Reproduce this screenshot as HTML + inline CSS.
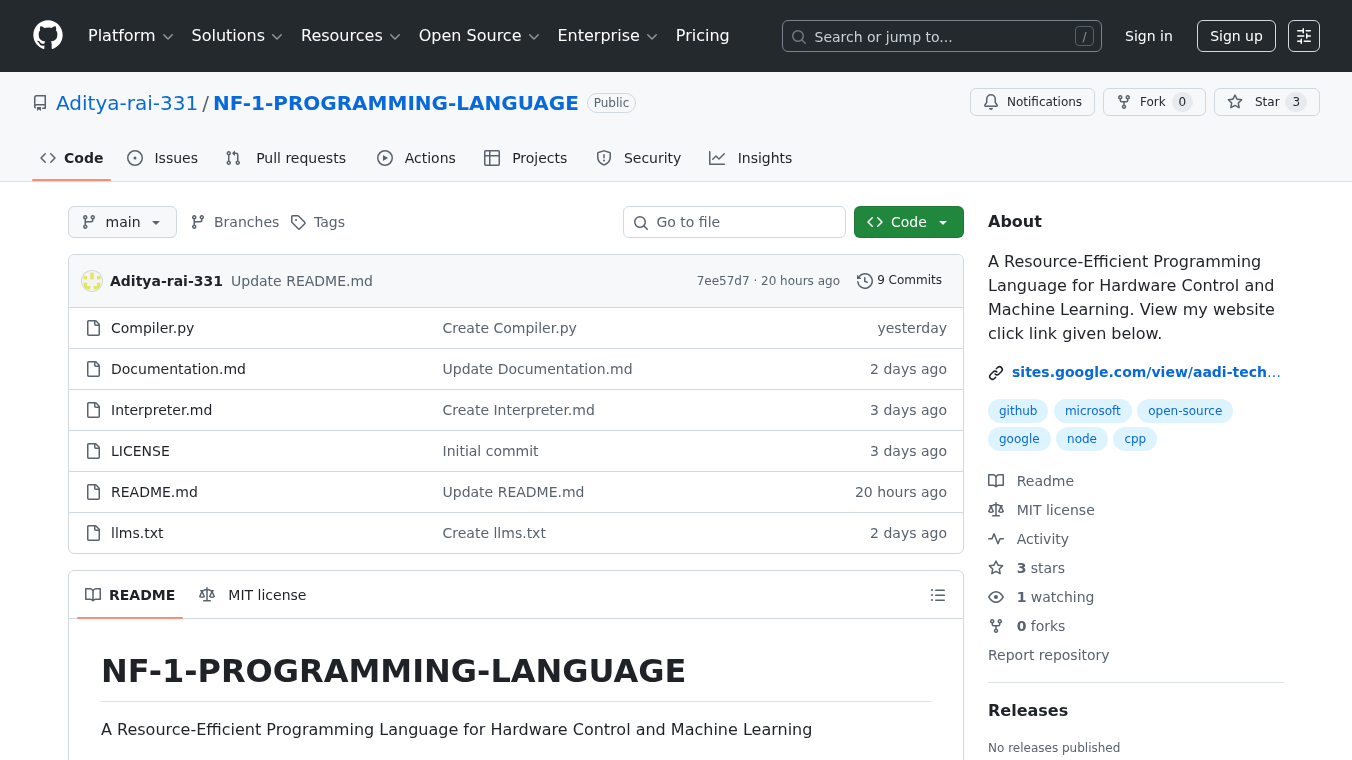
<!DOCTYPE html>
<html lang="en">
<head>
<meta charset="utf-8">
<title>Aditya-rai-331/NF-1-PROGRAMMING-LANGUAGE</title>
<style>
*{box-sizing:border-box}
html,body{margin:0;padding:0}
body{width:1352px;height:760px;overflow:hidden;will-change:transform;background:#fff;color:#1f2328;font-family:"DejaVu Sans","Liberation Sans",sans-serif;font-size:14px;line-height:1.5}
a{color:inherit;text-decoration:none}
svg{display:inline-block;fill:currentColor;vertical-align:text-bottom;overflow:visible}
/* header */
.hdr{position:absolute;left:0;top:0;width:1352px;height:72px;background:#24292e;color:#fff}
.hdr .logo{position:absolute;left:32px;top:18.6px;width:32px;height:32px;color:#fff}
.nav{position:absolute;left:80px;top:20px;height:32px;display:flex;align-items:center;font-size:16px;line-height:24px}
.nav .it{padding:0 8px;display:flex;align-items:center;white-space:nowrap}
.nav .it svg{margin-left:4.4px;margin-right:-.4px;opacity:.5;width:16px;height:16px;position:relative;top:1px}
.srch{position:absolute;left:782px;top:20px;width:320px;height:32px;border:1px solid #7a838e;border-radius:6px;color:#c9d1d9;font-size:14px}
.srch svg.s{position:absolute;left:8px;top:7.5px;color:#6e7781}
.srch .ph{position:absolute;left:31.5px;top:6px;line-height:21px;color:#c9d1d9}
.srch .k{position:absolute;right:7px;top:5px;width:19px;height:20px;border:1px solid #57606a;border-radius:4px;color:#8c959f;font-size:12px;line-height:20px;text-align:center}
.signin{position:absolute;left:1125px;top:24px;font-size:14px;line-height:24px;color:#fff}
.signup{position:absolute;left:1197px;top:20px;width:79px;height:32px;border:1px solid #d1d9e0;border-radius:6px;font-size:14px;line-height:30px;text-align:center;color:#fff}
.sld{position:absolute;left:1288px;top:20px;width:32px;height:32px;border:1px solid #d1d9e0;border-radius:6px;color:#fff}
.sld svg{position:absolute;left:7px;top:7px}
/* repo head */
.rh{position:absolute;left:0;top:72px;width:1352px;height:110px;background:#f6f8fa;border-bottom:1px solid #d1d9e0b3}

.rh .ricon{position:absolute;left:32px;top:23px;color:#59636e}
.rh .ttl{position:absolute;left:56px;top:16px;font-size:20px;line-height:30px;white-space:nowrap;display:flex;align-items:center}
.rh .ttl .o{color:#0969da}
.rh .ttl .sl{color:#59636e;margin:0 4px}
.rh .ttl .r{color:#0969da;font-weight:bold}
.rh .ttl .pub{margin-left:8px;font-size:12px;line-height:18px;font-weight:normal;color:#59636e;border:1px solid #d1d9e0;border-radius:2em;padding:0 5.9px}
.btn{position:absolute;top:16px;height:28px;border:1px solid #d1d9e0;border-radius:6px;background:#f6f8fa;font-size:12px;line-height:20px;color:#24292f;padding:3px 12px;white-space:nowrap;display:flex;align-items:center}
.btn svg{color:#59636e;margin-right:8px}
.btn .cnt{margin-left:5.8px;background:rgba(175,184,193,.2);border:1px solid transparent;border-radius:2em;padding:0 6px;min-width:20px;line-height:18px;font-size:12px;text-align:center}
.tabs{position:absolute;left:32px;top:62px;height:48px;display:flex;font-size:14px;line-height:30px}
.tabs .t{position:relative;display:flex;align-items:center;padding:0 8px;height:32px;margin-right:8px;margin-top:8px;white-space:nowrap;color:#1f2328}
.tabs .t svg{color:#59636e;margin-right:8px}
.tabs .t .tx{display:inline-block;text-align:center;font-weight:normal}
.tabs .t.sel .tx{font-weight:bold}
.tabs .t.sel:after{content:"";position:absolute;left:0;right:0;bottom:-7px;height:2px;background:#fd8c73;border-radius:6px}

/* main */
#main{position:absolute;left:0;top:182px;width:1352px;height:578px;background:#fff}
.abs{position:absolute}
.bbtn{position:absolute;left:68px;top:24px;width:109px;height:32px;border:1px solid #d1d9e0;border-radius:6px;background:#f6f8fa;font-size:14px;line-height:20px;color:#24292f;display:flex;align-items:center;padding:0 12px}
.bbtn svg.br{color:#59636e;margin-right:8.6px}
.bbtn svg.tri{color:#59636e;margin-left:auto}
.lnk{position:absolute;top:24px;height:32px;display:flex;align-items:center;font-size:14px;color:#59636e;white-space:nowrap}
.lnk svg{margin-right:8px}
.gtf{position:absolute;left:623px;top:24px;width:223px;height:32px;border:1px solid #d1d9e0;border-radius:6px;background:#fff;color:#59636e;font-size:14px;line-height:20px}
.gtf svg{position:absolute;left:8.5px;top:7.5px}
.gtf span{position:absolute;left:32.5px;top:5px}
.cbtn{position:absolute;left:854px;top:24px;width:110px;height:32px;border:1px solid rgba(31,35,40,.15);border-radius:6px;background:#1f883d;color:#fff;font-size:14px;line-height:20px;font-weight:normal;display:flex;align-items:center;padding:0 12px}
.cbtn svg.c{margin-right:8px}
.cbtn svg.tri{margin-left:auto}
.box{position:absolute;left:68px;top:72px;width:896px;height:300px;border:1px solid #d1d9e0;border-radius:6px;overflow:hidden;background:#fff}
.box .hd{position:relative;height:53px;background:#f6f8fa;border-bottom:1px solid #d1d9e0}
.box .row{position:relative;height:41px;border-top:1px solid #d1d9e0;font-size:14px;line-height:20px}
.box .hd + .row{border-top:0;height:40px}
.box .row svg{position:absolute;left:16px;bottom:12px;color:#59636e}
.box .row .n{position:absolute;left:42px;bottom:10px;color:#1f2328}
.box .row .m{position:absolute;left:373.5px;bottom:10px;color:#59636e}
.box .row .d{position:absolute;right:16px;bottom:10px;color:#59636e}

.hd .av{position:absolute;left:13px;top:16px;width:20px;height:20px;border-radius:50%;background:#f0f0e0;box-shadow:0 0 0 1px rgba(31,35,40,.15);overflow:hidden}
.hd .au{position:absolute;left:41px;top:16px;font-size:14px;line-height:20px;font-weight:bold;color:#1f2328;white-space:nowrap}
.hd .ms{position:absolute;left:162px;top:16px;font-size:14px;line-height:20px;color:#59636e;white-space:nowrap}
.hd .sha{position:absolute;right:123px;top:17px;font-size:12px;line-height:18px;color:#59636e;white-space:nowrap}
.hd .cm{position:absolute;right:21px;top:16px;font-size:12px;line-height:18px;color:#1f2328;white-space:nowrap;display:flex;align-items:center;font-weight:normal}
.hd .cm svg{margin-right:4px;margin-left:1px;position:relative;top:1px;color:#59636e}
/* readme */
.rd{position:absolute;left:68px;top:388px;width:896px;height:220px;border:1px solid #d1d9e0;border-radius:6px;background:#fff}
.rd .th{position:relative;height:48px;border-bottom:1px solid #d1d9e0}
.rd .tb{position:absolute;top:8px;height:32px;display:flex;align-items:center;font-size:14px;line-height:20px;color:#1f2328;white-space:nowrap}
.rd .tb svg{color:#59636e;margin-right:8px}
.rd .tb b{display:inline-block;text-align:center;font-weight:normal}
.rd .tb.sel b{font-weight:bold}
.rd .tb.sel:after{content:"";position:absolute;left:-8px;right:-8px;bottom:-8px;height:2px;background:#fd8c73;border-radius:6px}
.rd .ol{position:absolute;right:17px;top:16px;color:#59636e}
.rd h1{position:absolute;left:32px;top:80px;width:830px;margin:0;font-size:32px;line-height:40px;font-weight:bold;color:#1f2328;padding-bottom:9.6px;border-bottom:1px solid #d1d9e0b3;white-space:nowrap}
.rd p{position:absolute;left:32px;top:147px;margin:0;font-size:16px;line-height:24px;color:#1f2328;white-space:nowrap}
/* sidebar */
.sb{position:absolute;left:988px;top:0;width:296px}
.sb h2{position:absolute;left:0;margin:0;font-size:16px;line-height:24px;font-weight:bold;color:#1f2328}
.sb .desc{position:absolute;left:0;top:68px;width:296px;font-size:16px;line-height:24px;color:#1f2328}
.sb .url{position:absolute;left:0;top:180px;font-size:14px;line-height:20px;font-weight:bold;color:#0969da;white-space:nowrap;display:flex;align-items:center}
.sb .url svg{color:#1f2328;margin-right:8px;position:relative;top:1px}
.sb .tps{position:absolute;left:0;top:217px;width:296px;display:flex;flex-wrap:wrap;column-gap:5.4px;row-gap:4.3px}
.sb .tp{height:24px;border:1px solid transparent;border-radius:2em;background:#ddf4ff;color:#0969da;font-size:12px;line-height:22px;padding:0 10px;white-space:nowrap}
.sb .li{position:absolute;left:0;font-size:14px;line-height:21px;color:#59636e;white-space:nowrap;display:flex;align-items:center}
.sb .li svg{margin-right:12.7px;position:relative;top:-1px}
.sb .li b{font-weight:bold;margin-right:4.3px}
.sb hr{position:absolute;left:0;top:500px;width:296px;height:1px;border:0;margin:0;background:#d1d9e0b3}
.sb .nr{position:absolute;left:0;top:557px;font-size:12px;line-height:18px;color:#59636e;white-space:nowrap}
</style>
</head>
<body>
<div class="hdr">
  <svg class="logo" viewBox="0 0 24 24"><path d="M12 1C5.923 1 1 5.923 1 12c0 4.867 3.149 8.979 7.521 10.436.55.096.756-.233.756-.522 0-.262-.013-1.128-.013-2.049-2.764.509-3.479-.674-3.699-1.292-.124-.317-.66-1.293-1.127-1.554-.385-.207-.936-.715-.014-.729.866-.014 1.485.797 1.691 1.128.99 1.663 2.571 1.196 3.204.907.096-.715.385-1.196.701-1.471-2.448-.275-5.005-1.224-5.005-5.432 0-1.196.426-2.186 1.128-2.956-.111-.275-.496-1.402.11-2.915 0 0 .921-.288 3.024 1.128a10.193 10.193 0 0 1 2.75-.371c.936 0 1.871.123 2.75.371 2.104-1.43 3.025-1.128 3.025-1.128.605 1.513.221 2.64.111 2.915.701.77 1.127 1.747 1.127 2.956 0 4.222-2.571 5.157-5.019 5.432.399.344.743 1.004.743 2.035 0 1.471-.014 2.654-.014 3.025 0 .289.206.632.756.522C19.851 20.979 23 16.854 23 12c0-6.077-4.922-11-11-11Z"/></svg>
  <div class="nav">
    <span class="it">Platform<svg viewBox="0 0 16 16"><path d="M12.78 5.22a.749.749 0 0 1 0 1.06l-4.25 4.25a.749.749 0 0 1-1.06 0L3.22 6.28a.749.749 0 1 1 1.06-1.06L8 8.939l3.72-3.719a.749.749 0 0 1 1.06 0Z"/></svg></span>
    <span class="it">Solutions<svg viewBox="0 0 16 16"><path d="M12.78 5.22a.749.749 0 0 1 0 1.06l-4.25 4.25a.749.749 0 0 1-1.06 0L3.22 6.28a.749.749 0 1 1 1.06-1.06L8 8.939l3.72-3.719a.749.749 0 0 1 1.06 0Z"/></svg></span>
    <span class="it">Resources<svg viewBox="0 0 16 16"><path d="M12.78 5.22a.749.749 0 0 1 0 1.06l-4.25 4.25a.749.749 0 0 1-1.06 0L3.22 6.28a.749.749 0 1 1 1.06-1.06L8 8.939l3.72-3.719a.749.749 0 0 1 1.06 0Z"/></svg></span>
    <span class="it">Open Source<svg viewBox="0 0 16 16"><path d="M12.78 5.22a.749.749 0 0 1 0 1.06l-4.25 4.25a.749.749 0 0 1-1.06 0L3.22 6.28a.749.749 0 1 1 1.06-1.06L8 8.939l3.72-3.719a.749.749 0 0 1 1.06 0Z"/></svg></span>
    <span class="it">Enterprise<svg viewBox="0 0 16 16"><path d="M12.78 5.22a.749.749 0 0 1 0 1.06l-4.25 4.25a.749.749 0 0 1-1.06 0L3.22 6.28a.749.749 0 1 1 1.06-1.06L8 8.939l3.72-3.719a.749.749 0 0 1 1.06 0Z"/></svg></span>
    <span class="it">Pricing</span>
  </div>
  <div class="srch">
    <svg class="s" width="16" height="16" viewBox="0 0 16 16"><path d="M10.68 11.74a6 6 0 0 1-7.922-8.982 6 6 0 0 1 8.982 7.922l3.04 3.04a.749.749 0 0 1-.326 1.275.749.749 0 0 1-.734-.215ZM11.5 7a4.499 4.499 0 1 0-8.997 0A4.499 4.499 0 0 0 11.5 7Z"/></svg>
    <span class="ph">Search or jump to...</span>
    <span class="k">/</span>
  </div>
  <span class="signin">Sign in</span>
  <span class="signup">Sign up</span>
  <span class="sld"><svg width="16" height="16" viewBox="0 0 16 16"><path d="M15 2.75a.75.75 0 0 1-.75.75h-4a.75.75 0 0 1 0-1.5h4a.75.75 0 0 1 .75.75Zm-8.5.75v1.25a.75.75 0 0 0 1.5 0v-4a.75.75 0 0 0-1.5 0V2H1.75a.75.75 0 0 0 0 1.5H6.5Zm1.25 5.25a.75.75 0 0 0 0-1.5h-6a.75.75 0 0 0 0 1.5h6ZM15 8a.75.75 0 0 1-.75.75H11.5V10a.75.75 0 1 1-1.5 0V6a.75.75 0 0 1 1.5 0v1.25h2.75A.75.75 0 0 1 15 8Zm-9 5.25v-2a.75.75 0 0 0-1.5 0v1.25H1.75a.75.75 0 0 0 0 1.5H4.5v1.25a.75.75 0 0 0 1.5 0v-1.25Zm9 0a.75.75 0 0 1-.75.75h-6a.75.75 0 0 1 0-1.5h6a.75.75 0 0 1 .75.75Z"/></svg></span>
</div>
<div class="rh" id="rh">
  <svg class="ricon" width="16" height="16" viewBox="0 0 16 16"><path d="M2 2.5A2.5 2.5 0 0 1 4.5 0h8.75a.75.75 0 0 1 .75.75v12.5a.75.75 0 0 1-.75.75h-2.5a.75.75 0 0 1 0-1.5h1.75v-2h-8a1 1 0 0 0-.714 1.7.75.75 0 1 1-1.072 1.05A2.495 2.495 0 0 1 2 11.5Zm10.5-1h-8a1 1 0 0 0-1 1v6.708A2.486 2.486 0 0 1 4.5 9h8ZM5 12.25a.25.25 0 0 1 .25-.25h3.5a.25.25 0 0 1 .25.25v3.25a.25.25 0 0 1-.4.2l-1.45-1.087a.249.249 0 0 0-.3 0L5.4 15.7a.25.25 0 0 1-.4-.2Z"/></svg>
  <div class="ttl"><span class="o">Aditya-rai-331</span><span class="sl">/</span><span class="r">NF-1-PROGRAMMING-LANGUAGE</span><span class="pub">Public</span></div>
  <div class="btn" style="left:970px;width:125px"><svg width="16" height="16" viewBox="0 0 16 16"><path d="M8 16a2 2 0 0 0 1.985-1.75c.017-.137-.097-.25-.235-.25h-3.5c-.138 0-.252.113-.235.25A2 2 0 0 0 8 16ZM3 5a5 5 0 0 1 10 0v2.947c0 .05.015.098.042.139l1.703 2.555A1.519 1.519 0 0 1 13.482 13H2.518a1.516 1.516 0 0 1-1.263-2.36l1.703-2.554A.255.255 0 0 0 3 7.947Zm5-3.5A3.5 3.5 0 0 0 4.5 5v2.947c0 .346-.102.683-.294.97l-1.703 2.556a.017.017 0 0 0-.003.01l.001.006c0 .002.002.004.004.006l.006.004.007.001h10.964l.007-.001.006-.004.004-.006.001-.007a.017.017 0 0 0-.003-.01l-1.703-2.554a1.745 1.745 0 0 1-.294-.97V5A3.5 3.5 0 0 0 8 1.5Z"/></svg>Notifications</div>
  <div class="btn" style="left:1103px;width:102.5px"><svg width="16" height="16" viewBox="0 0 16 16"><path d="M5 5.372v.878c0 .414.336.75.75.75h4.5a.75.75 0 0 0 .75-.75v-.878a2.25 2.25 0 1 1 1.500 0v.878a2.25 2.25 0 0 1-2.25 2.25h-1.500v2.128a2.251 2.251 0 1 1-1.500 0V8.500h-1.500A2.250 2.250 0 0 1 3.500 6.250v-.878a2.250 2.250 0 1 1 1.500 0ZM5 3.250a.750.750 0 1 0-1.500 0 .750.750 0 0 0 1.500 0Zm6.750.750a.750.750 0 1 0 0-1.500.750.750 0 0 0 0 1.500Zm-3 8.750a.750.750 0 1 0-1.500 0 .750.750 0 0 0 1.500 0Z"/></svg>Fork<span class="cnt">0</span></div>
  <div class="btn" style="left:1214px;width:106px"><svg width="16" height="16" viewBox="0 0 16 16"><path d="M8 .25a.75.75 0 0 1 .673.418l1.882 3.815 4.21.612a.75.75 0 0 1 .416 1.279l-3.046 2.97.719 4.192a.751.751 0 0 1-1.088.791L8 12.347l-3.766 1.98a.75.75 0 0 1-1.088-.79l.72-4.194L.818 6.374a.75.75 0 0 1 .416-1.28l4.21-.611L7.327.668A.75.75 0 0 1 8 .25Zm0 2.445L6.615 5.5a.75.75 0 0 1-.564.41l-3.097.45 2.24 2.184a.75.75 0 0 1 .216.664l-.528 3.084 2.769-1.456a.75.75 0 0 1 .698 0l2.77 1.456-.53-3.084a.75.75 0 0 1 .216-.664l2.24-2.183-3.096-.45a.75.75 0 0 1-.564-.41L8 2.694Z"/></svg><span style="margin-left:4px">Star</span><span class="cnt">3</span></div>
  <div class="tabs">
    <span class="t sel"><svg width="16" height="16" viewBox="0 0 16 16"><path d="m11.28 3.22 4.25 4.25a.75.75 0 0 1 0 1.06l-4.25 4.25a.749.749 0 0 1-1.275-.326.749.749 0 0 1 .215-.734L13.94 8l-3.72-3.72a.749.749 0 0 1 .326-1.275.749.749 0 0 1 .734.215Zm-6.56 0a.751.751 0 0 1 1.042.018.751.751 0 0 1 .018 1.042L2.06 8l3.72 3.72a.749.749 0 0 1-.326 1.275.749.749 0 0 1-.734-.215L.47 8.53a.75.75 0 0 1 0-1.06Z"/></svg><b class="tx" style="width:39.42px">Code</b></span>
    <span class="t"><svg width="16" height="16" viewBox="0 0 16 16"><path d="M8 9.5a1.5 1.5 0 1 0 0-3 1.5 1.5 0 0 0 0 3Z"/><path d="M8 0a8 8 0 1 1 0 16A8 8 0 0 1 8 0ZM1.5 8a6.5 6.5 0 1 0 13 0 6.5 6.5 0 0 0-13 0Z"/></svg><b class="tx" style="width:49.67px">Issues</b></span>
    <span class="t"><svg width="16" height="16" viewBox="0 0 16 16"><path d="M1.5 3.25a2.25 2.25 0 1 1 3 2.122v5.256a2.251 2.251 0 1 1-1.5 0V5.372A2.25 2.25 0 0 1 1.5 3.25Zm5.677-.177L9.573.677A.25.25 0 0 1 10 .854V2.5h1A2.5 2.5 0 0 1 13.5 5v5.628a2.251 2.251 0 1 1-1.5 0V5a1 1 0 0 0-1-1h-1v1.646a.25.25 0 0 1-.427.177L7.177 3.427a.25.25 0 0 1 0-.354ZM3.75 2.5a.75.75 0 1 0 0 1.5.75.75 0 0 0 0-1.5Zm0 9.5a.75.75 0 1 0 0 1.5.75.75 0 0 0 0-1.5Zm8.25.75a.75.75 0 1 0 1.5 0 .75.75 0 0 0-1.5 0Z"/></svg><b class="tx" style="width:103.95px">Pull requests</b></span>
    <span class="t"><svg width="16" height="16" viewBox="0 0 16 16"><path d="M8 0a8 8 0 1 1 0 16A8 8 0 0 1 8 0ZM1.5 8a6.5 6.5 0 1 0 13 0 6.5 6.5 0 0 0-13 0Zm4.879-2.773 4.264 2.559a.25.25 0 0 1 0 .428l-4.264 2.559A.25.25 0 0 1 6 10.559V5.442a.25.25 0 0 1 .379-.215Z"/></svg><b class="tx" style="width:58.55px">Actions</b></span>
    <span class="t"><svg width="16" height="16" viewBox="0 0 16 16"><path d="M0 1.75C0 .784.784 0 1.75 0h12.5C15.216 0 16 .784 16 1.75v12.5A1.75 1.75 0 0 1 14.25 16H1.75A1.75 1.75 0 0 1 0 14.25ZM6.5 6.5v8h7.75a.25.25 0 0 0 .25-.25V6.5Zm8-1.5V1.75a.25.25 0 0 0-.25-.25H6.5V5Zm-13 1.5v7.75c0 .138.112.25.25.25H5v-8ZM5 5V1.5H1.75a.25.25 0 0 0-.25.25V5Z"/></svg><b class="tx" style="width:64.41px">Projects</b></span>
    <span class="t"><svg width="16" height="16" viewBox="0 0 16 16"><path d="M7.467.133a1.748 1.748 0 0 1 1.066 0l5.25 1.68A1.75 1.75 0 0 1 15 3.48V7c0 1.566-.32 3.182-1.303 4.682-.983 1.498-2.585 2.813-5.032 3.855a1.697 1.697 0 0 1-1.33 0c-2.447-1.042-4.049-2.357-5.032-3.855C1.32 10.182 1 8.566 1 7V3.48a1.75 1.75 0 0 1 1.217-1.667Zm.61 1.429a.25.25 0 0 0-.153 0l-5.25 1.68a.25.25 0 0 0-.174.238V7c0 1.358.275 2.666 1.057 3.86.784 1.194 2.121 2.34 4.366 3.297a.196.196 0 0 0 .154 0c2.245-.956 3.582-2.104 4.366-3.298C13.225 9.666 13.5 8.36 13.5 7V3.48a.251.251 0 0 0-.174-.237l-5.25-1.68ZM8.75 4.75v3a.75.75 0 0 1-1.5 0v-3a.75.75 0 0 1 1.5 0ZM9 10.5a1 1 0 1 1-2 0 1 1 0 0 1 2 0Z"/></svg><b class="tx" style="width:65.38px">Security</b></span>
    <span class="t"><svg width="16" height="16" viewBox="0 0 16 16"><path d="M1.5 1.75V13.5h13.75a.75.75 0 0 1 0 1.5H.75a.75.75 0 0 1-.75-.75V1.75a.75.75 0 0 1 1.5 0Zm14.28 2.53-5.25 5.25a.75.75 0 0 1-1.06 0L7 7.06 4.28 9.78a.751.751 0 0 1-1.042-.018.751.751 0 0 1-.018-1.042l3.25-3.25a.75.75 0 0 1 1.06 0L10 7.94l4.72-4.72a.751.751 0 0 1 1.042.018.751.751 0 0 1 .018 1.042Z"/></svg><b class="tx" style="width:63.33px">Insights</b></span>
  </div>
</div>
<div id="main">
  <div class="bbtn"><svg class="br" width="16" height="16" viewBox="0 0 16 16"><path d="M9.5 3.25a2.25 2.25 0 1 1 3 2.122V6A2.5 2.5 0 0 1 10 8.5H6a1 1 0 0 0-1 1v1.128a2.251 2.251 0 1 1-1.5 0V5.372a2.25 2.25 0 1 1 1.5 0v1.836A2.493 2.493 0 0 1 6 7h4a1 1 0 0 0 1-1v-.628A2.25 2.25 0 0 1 9.5 3.25Zm-6 0a.75.75 0 1 0 1.5 0 .75.75 0 0 0-1.5 0Zm8.25-.75a.75.75 0 1 0 0 1.5.75.75 0 0 0 0-1.5ZM4.25 12a.75.75 0 1 0 0 1.5.75.75 0 0 0 0-1.5Z"/></svg>main<svg class="tri" width="16" height="16" viewBox="0 0 16 16"><path d="m4.427 7.427 3.396 3.396a.25.25 0 0 0 .354 0l3.396-3.396A.25.25 0 0 0 11.396 7H4.604a.25.25 0 0 0-.177.427Z"/></svg></div>
  <div class="lnk" style="left:190px"><svg width="16" height="16" viewBox="0 0 16 16"><path d="M9.5 3.25a2.25 2.25 0 1 1 3 2.122V6A2.5 2.5 0 0 1 10 8.5H6a1 1 0 0 0-1 1v1.128a2.251 2.251 0 1 1-1.5 0V5.372a2.25 2.25 0 1 1 1.5 0v1.836A2.493 2.493 0 0 1 6 7h4a1 1 0 0 0 1-1v-.628A2.25 2.25 0 0 1 9.5 3.25Zm-6 0a.75.75 0 1 0 1.5 0 .75.75 0 0 0-1.5 0Zm8.25-.75a.75.75 0 1 0 0 1.5.75.75 0 0 0 0-1.5ZM4.25 12a.75.75 0 1 0 0 1.5.75.75 0 0 0 0-1.5Z"/></svg>Branches</div>
  <div class="lnk" style="left:290px"><svg width="16" height="16" viewBox="0 0 16 16"><path d="M1 7.775V2.75C1 1.784 1.784 1 2.75 1h5.025c.464 0 .91.184 1.238.513l6.25 6.25a1.75 1.75 0 0 1 0 2.474l-5.026 5.026a1.75 1.75 0 0 1-2.474 0l-6.25-6.25A1.752 1.752 0 0 1 1 7.775Zm1.5 0c0 .066.026.13.073.177l6.25 6.25a.25.25 0 0 0 .354 0l5.025-5.025a.25.25 0 0 0 0-.354l-6.25-6.25a.25.25 0 0 0-.177-.073H2.75a.25.25 0 0 0-.25.25ZM6 5a1 1 0 1 1 0 2 1 1 0 0 1 0-2Z"/></svg>Tags</div>
  <div class="gtf"><svg width="16" height="16" viewBox="0 0 16 16"><path d="M10.68 11.74a6 6 0 0 1-7.922-8.982 6 6 0 0 1 8.982 7.922l3.04 3.04a.749.749 0 0 1-.326 1.275.749.749 0 0 1-.734-.215ZM11.5 7a4.499 4.499 0 1 0-8.997 0A4.499 4.499 0 0 0 11.5 7Z"/></svg><span>Go to file</span></div>
  <div class="cbtn"><svg class="c" width="16" height="16" viewBox="0 0 16 16"><path d="m11.28 3.22 4.25 4.25a.75.75 0 0 1 0 1.06l-4.25 4.25a.749.749 0 0 1-1.275-.326.749.749 0 0 1 .215-.734L13.94 8l-3.72-3.72a.749.749 0 0 1 .326-1.275.749.749 0 0 1 .734.215Zm-6.56 0a.751.751 0 0 1 1.042.018.751.751 0 0 1 .018 1.042L2.06 8l3.72 3.72a.749.749 0 0 1-.326 1.275.749.749 0 0 1-.734-.215L.47 8.53a.75.75 0 0 1 0-1.06Z"/></svg>Code<svg class="tri" width="16" height="16" viewBox="0 0 16 16"><path d="m4.427 7.427 3.396 3.396a.25.25 0 0 0 .354 0l3.396-3.396A.25.25 0 0 0 11.396 7H4.604a.25.25 0 0 0-.177.427Z"/></svg></div>
  <div class="box">
    <div class="hd" id="hd">
      <span class="av"><svg width="20" height="20" viewBox="0 0 20 20"><defs><filter id="avb" x="-20%" y="-20%" width="140%" height="140%"><feGaussianBlur stdDeviation="0.55"/></filter></defs><rect width="20" height="20" fill="#f3f3f1"/><g fill="#e0e660" filter="url(#avb)"><rect x="8.34" y="1.67" width="3.38" height="3.38"/><rect x="1.67" y="5.00" width="3.38" height="3.38"/><rect x="8.34" y="5.00" width="3.38" height="3.38"/><rect x="15.00" y="5.00" width="3.38" height="3.38"/><rect x="1.67" y="11.67" width="3.38" height="3.38"/><rect x="15.00" y="11.67" width="3.38" height="3.38"/><rect x="1.67" y="15.00" width="3.38" height="3.38"/><rect x="5.00" y="15.00" width="3.38" height="3.38"/><rect x="11.67" y="15.00" width="3.38" height="3.38"/><rect x="15.00" y="15.00" width="3.38" height="3.38"/></g></svg></span>
      <span class="au">Aditya-rai-331</span><span class="ms">Update README.md</span>
      <span class="sha">7ee57d7 · 20 hours ago</span>
      <span class="cm"><svg width="16" height="16" viewBox="0 0 16 16"><path d="m.427 1.927 1.215 1.215a8.002 8.002 0 1 1-1.6 5.685.75.75 0 1 1 1.493-.154 6.5 6.5 0 1 0 1.18-4.458l1.358 1.358A.25.25 0 0 1 3.896 6H.25A.25.25 0 0 1 0 5.75V2.104a.25.25 0 0 1 .427-.177ZM7.75 4a.75.75 0 0 1 .75.75v2.992l2.028.812a.75.75 0 0 1-.557 1.392l-2.5-1A.751.751 0 0 1 7 8.25v-3.5A.75.75 0 0 1 7.750 4Z"/></svg>9 Commits</span>
    </div>
<div class="row"><svg width="16" height="16" viewBox="0 0 16 16"><path d="M2 1.75C2 .784 2.784 0 3.75 0h6.586c.464 0 .909.184 1.237.513l2.914 2.914c.329.328.513.773.513 1.237v9.586A1.75 1.75 0 0 1 13.25 16h-9.5A1.75 1.75 0 0 1 2 14.250Zm1.750-.250a.250.250 0 0 0-.250.250v12.500c0 .138.112.250.250.250h9.500a.250.250 0 0 0 .250-.250V6h-2.750A1.750 1.750 0 0 1 9 4.250V1.500Zm6.750.062V4.250c0 .138.112.250.250.250h2.688l-.011-.013-2.914-2.914-.013-.011Z"/></svg><span class="n">Compiler.py</span><span class="m">Create Compiler.py</span><span class="d">yesterday</span></div>
<div class="row"><svg width="16" height="16" viewBox="0 0 16 16"><path d="M2 1.75C2 .784 2.784 0 3.75 0h6.586c.464 0 .909.184 1.237.513l2.914 2.914c.329.328.513.773.513 1.237v9.586A1.75 1.75 0 0 1 13.25 16h-9.5A1.75 1.75 0 0 1 2 14.250Zm1.750-.250a.250.250 0 0 0-.250.250v12.500c0 .138.112.250.250.250h9.500a.250.250 0 0 0 .250-.250V6h-2.750A1.750 1.750 0 0 1 9 4.250V1.500Zm6.750.062V4.250c0 .138.112.250.250.250h2.688l-.011-.013-2.914-2.914-.013-.011Z"/></svg><span class="n">Documentation.md</span><span class="m">Update Documentation.md</span><span class="d">2 days ago</span></div>
<div class="row"><svg width="16" height="16" viewBox="0 0 16 16"><path d="M2 1.75C2 .784 2.784 0 3.75 0h6.586c.464 0 .909.184 1.237.513l2.914 2.914c.329.328.513.773.513 1.237v9.586A1.75 1.75 0 0 1 13.25 16h-9.5A1.75 1.75 0 0 1 2 14.250Zm1.750-.250a.250.250 0 0 0-.250.250v12.500c0 .138.112.250.250.250h9.500a.250.250 0 0 0 .250-.250V6h-2.750A1.750 1.750 0 0 1 9 4.250V1.500Zm6.750.062V4.250c0 .138.112.250.250.250h2.688l-.011-.013-2.914-2.914-.013-.011Z"/></svg><span class="n">Interpreter.md</span><span class="m">Create Interpreter.md</span><span class="d">3 days ago</span></div>
<div class="row"><svg width="16" height="16" viewBox="0 0 16 16"><path d="M2 1.75C2 .784 2.784 0 3.75 0h6.586c.464 0 .909.184 1.237.513l2.914 2.914c.329.328.513.773.513 1.237v9.586A1.75 1.75 0 0 1 13.25 16h-9.5A1.75 1.75 0 0 1 2 14.250Zm1.750-.250a.250.250 0 0 0-.250.250v12.500c0 .138.112.250.250.250h9.500a.250.250 0 0 0 .250-.250V6h-2.750A1.750 1.750 0 0 1 9 4.250V1.500Zm6.750.062V4.250c0 .138.112.250.250.250h2.688l-.011-.013-2.914-2.914-.013-.011Z"/></svg><span class="n">LICENSE</span><span class="m">Initial commit</span><span class="d">3 days ago</span></div>
<div class="row"><svg width="16" height="16" viewBox="0 0 16 16"><path d="M2 1.75C2 .784 2.784 0 3.75 0h6.586c.464 0 .909.184 1.237.513l2.914 2.914c.329.328.513.773.513 1.237v9.586A1.75 1.75 0 0 1 13.25 16h-9.5A1.75 1.75 0 0 1 2 14.250Zm1.750-.250a.250.250 0 0 0-.250.250v12.500c0 .138.112.250.250.250h9.500a.250.250 0 0 0 .250-.250V6h-2.750A1.750 1.750 0 0 1 9 4.250V1.500Zm6.750.062V4.250c0 .138.112.250.250.250h2.688l-.011-.013-2.914-2.914-.013-.011Z"/></svg><span class="n">README.md</span><span class="m">Update README.md</span><span class="d">20 hours ago</span></div>
<div class="row"><svg width="16" height="16" viewBox="0 0 16 16"><path d="M2 1.75C2 .784 2.784 0 3.75 0h6.586c.464 0 .909.184 1.237.513l2.914 2.914c.329.328.513.773.513 1.237v9.586A1.75 1.75 0 0 1 13.25 16h-9.5A1.75 1.75 0 0 1 2 14.250Zm1.750-.250a.250.250 0 0 0-.250.250v12.500c0 .138.112.250.250.250h9.500a.250.250 0 0 0 .250-.250V6h-2.750A1.750 1.750 0 0 1 9 4.250V1.500Zm6.750.062V4.250c0 .138.112.250.250.250h2.688l-.011-.013-2.914-2.914-.013-.011Z"/></svg><span class="n">llms.txt</span><span class="m">Create llms.txt</span><span class="d">2 days ago</span></div>
  </div>
  <div class="rd">
    <div class="th">
      <span class="tb sel" style="left:16px"><svg width="16" height="16" viewBox="0 0 16 16"><path d="M0 1.75A.75.75 0 0 1 .75 1h4.253c1.227 0 2.317.59 3 1.501A3.743 3.743 0 0 1 11.006 1h4.245a.75.75 0 0 1 .75.75v10.5a.75.75 0 0 1-.75.75h-4.507a2.25 2.25 0 0 0-1.591.659l-.622.621a.75.75 0 0 1-1.06 0l-.622-.621A2.25 2.25 0 0 0 5.258 13H.75a.75.75 0 0 1-.75-.75Zm7.251 10.324.004-5.073-.002-2.253A2.25 2.25 0 0 0 5.003 2.5H1.5v9h3.757a3.75 3.75 0 0 1 1.994.574ZM8.755 4.75l-.004 7.322a3.752 3.752 0 0 1 1.992-.572H14.5v-9h-3.495a2.25 2.25 0 0 0-2.25 2.25Z"/></svg><b style="width:66.3px">README</b></span>
      <span class="tb" style="left:130px"><svg width="16" height="16" viewBox="0 0 16 16"><path d="M8.75.75V2h.985c.304 0 .603.08.867.231l1.29.736c.038.022.08.033.124.033h2.234a.75.75 0 0 1 0 1.5h-.427l2.111 4.692a.75.75 0 0 1-.154.838l-.53-.53.529.531-.001.002-.002.002-.006.006-.006.005-.01.01-.045.04c-.21.176-.441.327-.686.45C14.556 10.78 13.88 11 13 11a4.498 4.498 0 0 1-2.023-.454 3.544 3.544 0 0 1-.686-.45l-.045-.04-.016-.015-.006-.006-.004-.004v-.001a.75.75 0 0 1-.154-.838L12.178 4.5h-.162c-.305 0-.604-.079-.868-.231l-1.29-.736a.245.245 0 0 0-.124-.033H8.75V13h2.5a.75.75 0 0 1 0 1.5h-6.5a.75.75 0 0 1 0-1.5h2.5V3.5h-.984a.245.245 0 0 0-.124.033l-1.289.737c-.265.15-.564.23-.869.23h-.162l2.112 4.692a.75.75 0 0 1-.154.838l-.53-.53.529.531-.001.002-.002.002-.006.006-.016.015-.045.04c-.21.176-.441.327-.686.45C4.556 10.78 3.88 11 3 11a4.498 4.498 0 0 1-2.023-.454 3.544 3.544 0 0 1-.686-.45l-.045-.04-.016-.015-.006-.006-.004-.004v-.001a.75.75 0 0 1-.154-.838L2.178 4.5H1.75a.75.75 0 0 1 0-1.5h2.234a.249.249 0 0 0 .125-.033l1.288-.737c.265-.15.564-.23.869-.23h.984V.75a.75.75 0 0 1 1.5 0Zm2.945 8.477c.285.135.718.273 1.305.273s1.02-.138 1.305-.273L13 6.327Zm-10 0c.285.135.718.273 1.305.273s1.02-.138 1.305-.273L3 6.327Z"/></svg><b style="width:88.77px">MIT license</b></span>
      <svg class="ol" width="16" height="16" viewBox="0 0 16 16"><path d="M5.75 2.5h8.5a.75.75 0 0 1 0 1.5h-8.5a.75.75 0 0 1 0-1.5Zm0 5h8.5a.75.75 0 0 1 0 1.5h-8.5a.75.75 0 0 1 0-1.5Zm0 5h8.5a.75.75 0 0 1 0 1.5h-8.5a.75.75 0 0 1 0-1.5ZM2 14a1 1 0 1 1 0-2 1 1 0 0 1 0 2Zm1-6a1 1 0 1 1-2 0 1 1 0 0 1 2 0ZM2 4a1 1 0 1 1 0-2 1 1 0 0 1 0 2Z"/></svg>
    </div>
    <h1>NF-1-PROGRAMMING-LANGUAGE</h1>
    <p>A Resource-Efficient Programming Language for Hardware Control and Machine Learning</p>
  </div>
  <div class="sb">
    <h2 style="top:28px">About</h2>
    <div class="desc">A Resource-Efficient Programming Language for Hardware Control and Machine Learning. View my website click link given below.</div>
    <div class="url"><svg width="16" height="16" viewBox="0 0 16 16"><path d="m7.775 3.275 1.25-1.25a3.5 3.5 0 1 1 4.95 4.95l-2.5 2.5a3.5 3.5 0 0 1-4.95 0 .751.751 0 0 1 .018-1.042.751.751 0 0 1 1.042-.018 1.998 1.998 0 0 0 2.83 0l2.5-2.5a2.002 2.002 0 0 0-2.83-2.83l-1.25 1.25a.751.751 0 0 1-1.042-.018.751.751 0 0 1-.018-1.042Zm-4.69 9.64a1.998 1.998 0 0 0 2.83 0l1.25-1.25a.751.751 0 0 1 1.042.018.751.751 0 0 1 .018 1.042l-1.25 1.25a3.5 3.5 0 1 1-4.95-4.950l2.5-2.5a3.5 3.5 0 0 1 4.95 0 .751.751 0 0 1-.018 1.042.751.751 0 0 1-1.042.018 1.998 1.998 0 0 0-2.83 0l-2.5 2.5a1.998 1.998 0 0 0 0 2.830Z"/></svg><span>sites.google.com/view/aadi-tech</span><span style="font-weight:normal">…</span></div>
    <div class="tps"><span class="tp">github</span><span class="tp">microsoft</span><span class="tp">open-source</span><span class="tp">google</span><span class="tp">node</span><span class="tp">cpp</span></div>
    <div class="li" style="top:289px"><svg width="16" height="16" viewBox="0 0 16 16"><path d="M0 1.75A.75.75 0 0 1 .75 1h4.253c1.227 0 2.317.59 3 1.501A3.743 3.743 0 0 1 11.006 1h4.245a.75.75 0 0 1 .75.75v10.5a.75.75 0 0 1-.75.75h-4.507a2.25 2.25 0 0 0-1.591.659l-.622.621a.75.75 0 0 1-1.06 0l-.622-.621A2.25 2.25 0 0 0 5.258 13H.75a.75.75 0 0 1-.75-.75Zm7.251 10.324.004-5.073-.002-2.253A2.25 2.25 0 0 0 5.003 2.5H1.5v9h3.757a3.75 3.75 0 0 1 1.994.574ZM8.755 4.75l-.004 7.322a3.752 3.752 0 0 1 1.992-.572H14.5v-9h-3.495a2.25 2.25 0 0 0-2.25 2.25Z"/></svg>Readme</div>
    <div class="li" style="top:318px"><svg width="16" height="16" viewBox="0 0 16 16"><path d="M8.75.75V2h.985c.304 0 .603.08.867.231l1.29.736c.038.022.08.033.124.033h2.234a.75.75 0 0 1 0 1.5h-.427l2.111 4.692a.75.75 0 0 1-.154.838l-.53-.53.529.531-.001.002-.002.002-.006.006-.006.005-.01.01-.045.04c-.21.176-.441.327-.686.45C14.556 10.78 13.88 11 13 11a4.498 4.498 0 0 1-2.023-.454 3.544 3.544 0 0 1-.686-.45l-.045-.04-.016-.015-.006-.006-.004-.004v-.001a.75.75 0 0 1-.154-.838L12.178 4.5h-.162c-.305 0-.604-.079-.868-.231l-1.29-.736a.245.245 0 0 0-.124-.033H8.75V13h2.5a.75.75 0 0 1 0 1.5h-6.5a.75.75 0 0 1 0-1.5h2.5V3.5h-.984a.245.245 0 0 0-.124.033l-1.289.737c-.265.15-.564.23-.869.23h-.162l2.112 4.692a.75.75 0 0 1-.154.838l-.53-.53.529.531-.001.002-.002.002-.006.006-.016.015-.045.04c-.21.176-.441.327-.686.45C4.556 10.78 3.88 11 3 11a4.498 4.498 0 0 1-2.023-.454 3.544 3.544 0 0 1-.686-.45l-.045-.04-.016-.015-.006-.006-.004-.004v-.001a.75.75 0 0 1-.154-.838L2.178 4.5H1.75a.75.75 0 0 1 0-1.5h2.234a.249.249 0 0 0 .125-.033l1.288-.737c.265-.15.564-.23.869-.23h.984V.75a.75.75 0 0 1 1.5 0Zm2.945 8.477c.285.135.718.273 1.305.273s1.02-.138 1.305-.273L13 6.327Zm-10 0c.285.135.718.273 1.305.273s1.02-.138 1.305-.273L3 6.327Z"/></svg>MIT license</div>
    <div class="li" style="top:347px"><svg width="16" height="16" viewBox="0 0 16 16"><path d="M6 2c.306 0 .582.187.696.471L10 10.731l1.304-3.260A.751.751 0 0 1 12 7h3.250a.750.750 0 0 1 0 1.500h-2.742l-1.812 4.528a.751.751 0 0 1-1.392 0L6 4.770 4.696 8.030A.750.750 0 0 1 4 8.500H.750a.750.750 0 0 1 0-1.500h2.742l1.812-4.529A.751.751 0 0 1 6 2Z"/></svg>Activity</div>
    <div class="li" style="top:376px"><svg width="16" height="16" viewBox="0 0 16 16"><path d="M8 .25a.75.75 0 0 1 .673.418l1.882 3.815 4.21.612a.75.75 0 0 1 .416 1.279l-3.046 2.97.719 4.192a.751.751 0 0 1-1.088.791L8 12.347l-3.766 1.98a.75.75 0 0 1-1.088-.79l.72-4.194L.818 6.374a.75.75 0 0 1 .416-1.28l4.21-.611L7.327.668A.75.75 0 0 1 8 .25Zm0 2.445L6.615 5.5a.75.75 0 0 1-.564.41l-3.097.45 2.24 2.184a.75.75 0 0 1 .216.664l-.528 3.084 2.769-1.456a.75.75 0 0 1 .698 0l2.77 1.456-.53-3.084a.75.75 0 0 1 .216-.664l2.24-2.183-3.096-.45a.75.75 0 0 1-.564-.41L8 2.694Z"/></svg><b>3</b>stars</div>
    <div class="li" style="top:405px"><svg width="16" height="16" viewBox="0 0 16 16"><path d="M8 2c1.981 0 3.671.992 4.933 2.078 1.27 1.091 2.187 2.345 2.637 3.023a1.62 1.62 0 0 1 0 1.798c-.45.678-1.367 1.932-2.637 3.023C11.67 13.008 9.981 14 8 14c-1.981 0-3.671-.992-4.933-2.078C1.797 10.83.88 9.576.43 8.898a1.62 1.62 0 0 1 0-1.798c.45-.677 1.367-1.931 2.637-3.022C4.33 2.992 6.019 2 8 2ZM1.679 7.932a.12.12 0 0 0 0 .136c.411.622 1.241 1.75 2.366 2.717C5.176 11.758 6.527 12.5 8 12.500c1.473 0 2.825-.742 3.955-1.715 1.124-.967 1.954-2.096 2.366-2.717a.12.12 0 0 0 0-.136c-.412-.621-1.242-1.750-2.366-2.717C10.824 4.242 9.473 3.500 8 3.500c-1.473 0-2.825.742-3.955 1.715-1.124.967-1.954 2.096-2.366 2.717ZM8 10a2 2 0 1 1-.001-3.999A2 2 0 0 1 8 10Z"/></svg><b>1</b>watching</div>
    <div class="li" style="top:434px"><svg width="16" height="16" viewBox="0 0 16 16"><path d="M5 5.372v.878c0 .414.336.75.75.75h4.5a.75.75 0 0 0 .75-.75v-.878a2.25 2.25 0 1 1 1.5 0v.878a2.25 2.25 0 0 1-2.25 2.25h-1.5v2.128a2.251 2.251 0 1 1-1.5 0V8.5h-1.5A2.25 2.25 0 0 1 3.5 6.25v-.878a2.25 2.25 0 1 1 1.5 0ZM5 3.25a.75.75 0 1 0-1.5 0 .75.75 0 0 0 1.5 0Zm6.75.75a.75.75 0 1 0 0-1.5.75.75 0 0 0 0 1.5Zm-3 8.75a.75.75 0 1 0-1.5 0 .75.75 0 0 0 1.5 0Z"/></svg><b>0</b>forks</div>
    <div class="li" style="top:463px">Report repository</div>
    <hr>
    <h2 style="top:517px">Releases</h2>
    <div class="nr">No releases published</div>
  </div>
</div>
</body>
</html>
